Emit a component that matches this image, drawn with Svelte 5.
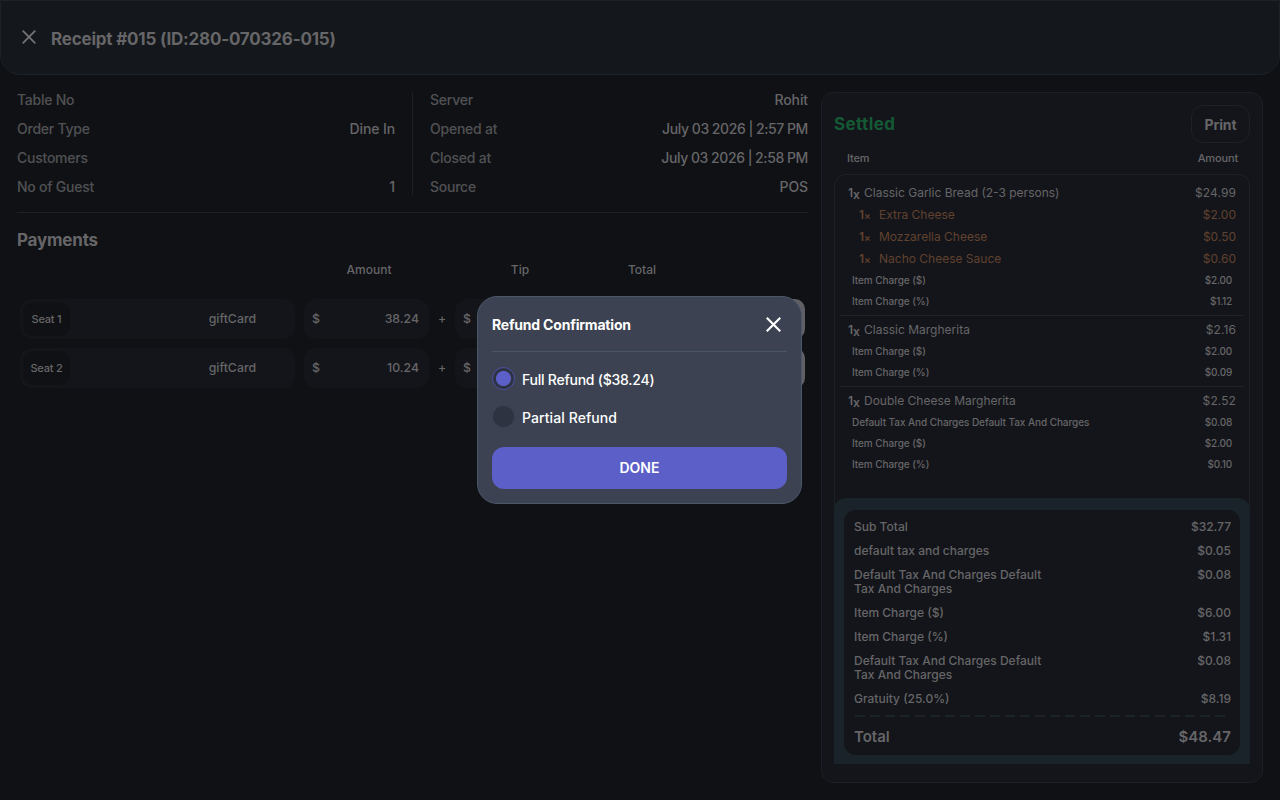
<script>
  let refund_type = $state('full');
  let modal_open = $state(true);

  const order_info = [
    ['Table No', ''],
    ['Order Type', 'Dine In'],
    ['Customers', ''],
    ['No of Guest', '1'],
  ];

  const server_info = [
    ['Server', 'Rohit'],
    ['Opened at', 'July 03 2026 | 2:57 PM'],
    ['Closed at', 'July 03 2026 | 2:58 PM'],
    ['Source', 'POS'],
  ];

  const payments = [
    { seat: 'Seat 1', method: 'giftCard', amount: '38.24' },
    { seat: 'Seat 2', method: 'giftCard', amount: '10.24' },
  ];

  const items = [
    {
      name: 'Classic Garlic Bread (2-3 persons)',
      price: '$24.99',
      modifiers: [
        ['Extra Cheese', '$2.00'],
        ['Mozzarella Cheese', '$0.50'],
        ['Nacho Cheese Sauce', '$0.60'],
      ],
      charges: [
        ['Item Charge ($)', '$2.00'],
        ['Item Charge (%)', '$1.12'],
      ],
    },
    {
      name: 'Classic Margherita',
      price: '$2.16',
      modifiers: [],
      charges: [
        ['Item Charge ($)', '$2.00'],
        ['Item Charge (%)', '$0.09'],
      ],
    },
    {
      name: 'Double Cheese Margherita',
      price: '$2.52',
      modifiers: [],
      charges: [
        ['Default Tax And Charges Default Tax And Charges', '$0.08'],
        ['Item Charge ($)', '$2.00'],
        ['Item Charge (%)', '$0.10'],
      ],
    },
  ];

  const summary = [
    ['Sub Total', '$32.77'],
    ['default tax and charges', '$0.05'],
    ['Default Tax And Charges Default Tax And Charges', '$0.08'],
    ['Item Charge ($)', '$6.00'],
    ['Item Charge (%)', '$1.31'],
    ['Default Tax And Charges Default Tax And Charges', '$0.08'],
    ['Gratuity (25.0%)', '$8.19'],
  ];
</script>

{#snippet cross(size)}
  <svg width={size} height={size} viewBox="0 0 14 14" fill="none" stroke="currentColor">
    <path d="M.7.7l12.6 12.6M13.3.7L.7 13.3" />
  </svg>
{/snippet}

{#snippet info(rows)}
  <dl class="info">
    {#each rows as [label, value]}
      <div class="info_row">
        <dt>{label}</dt>
        <dd class:date={value.includes('|')}>{value}</dd>
      </div>
    {/each}
  </dl>
{/snippet}

<div class="page">
  <header class="header">
    <button class="icon_button" aria-label="Back">{@render cross(14)}</button>
    <h1>Receipt #015 (ID:280-070326-015)</h1>
  </header>

  <main class="content">
    <section class="details">
      <div class="info_grid">
        {@render info(order_info)}
        {@render info(server_info)}
      </div>

      <h2>Payments</h2>
      <div class="pay_head">
        <span>Amount</span>
        <span>Tip</span>
        <span>Total</span>
      </div>
      {#each payments as payment}
        <div class="pay_row">
          <div class="method">
            <span class="seat">{payment.seat}</span>
            <span>{payment.method}</span>
          </div>
          <div class="money"><span>$</span><span>{payment.amount}</span></div>
          <span class="sign">+</span>
          <div class="money"><span>$</span></div>
          <button class="refund" aria-label="Refund"></button>
        </div>
      {/each}
    </section>

    <aside class="receipt">
      <div class="receipt_top">
        <span class="status">Settled</span>
        <button class="print">Print</button>
      </div>
      <div class="list_head"><span>Item</span><span>Amount</span></div>
      <div class="list">
        {#each items as item}
          <div class="item">
            <div class="line main">
              <span><b>1<small>x</small></b>{item.name}</span>
              <span class="price">{item.price}</span>
            </div>
            {#each item.modifiers as [name, price]}
              <div class="line modifier">
                <span><b>1<small>×</small></b>{name}</span>
                <span>{price}</span>
              </div>
            {/each}
            {#each item.charges as [name, price]}
              <div class="line charge"><span>{name}</span><span class="price">{price}</span></div>
            {/each}
          </div>
        {/each}
      </div>
      <div class="summary">
        <div class="summary_card">
          {#each summary as [name, price]}
            <div class="sum_row"><span class="sum_name">{name}</span><span>{price}</span></div>
          {/each}
          <div class="dashes"></div>
          <div class="sum_row total"><span>Total</span><span>$48.47</span></div>
        </div>
      </div>
    </aside>
  </main>
</div>

{#if modal_open}
  <div class="overlay">
    <div class="modal" role="dialog" aria-label="Refund Confirmation">
      <div class="modal_head">
        <h3>Refund Confirmation</h3>
        <button class="icon_button" aria-label="Close" onclick={() => modal_open = false}>
          {@render cross(15)}
        </button>
      </div>
      <label class="option full">
        <input type="radio" value="full" bind:group={refund_type}>
        <span>Full Refund ($38.24)</span>
      </label>
      <label class="option partial">
        <input type="radio" value="partial" bind:group={refund_type}>
        <span>Partial Refund</span>
      </label>
      <button class="done">DONE</button>
    </div>
  </div>
{/if}

<style>
:global(body){
  background: #101115;
  overflow: hidden;
}

.page, .overlay{
  font-family: Inter, "Liberation Sans", sans-serif;
  box-sizing: border-box;
}

.page *, .overlay *{
  box-sizing: border-box;
}

.page{
  height: 100vh;
  display: flex;
  flex-direction: column;
  color: #666668;
  font-weight: 500;
}

h1, h2, h3, dl, dt, dd{
  margin: 0;
}

button{
  font-family: inherit;
  color: inherit;
  cursor: pointer;
}

.icon_button{
  background: none;
  border: 0;
  padding: 0;
  display: flex;
}

.header{
  height: 75px;
  flex: none;
  display: flex;
  align-items: center;
  gap: 15px;
  padding: 4px 21px 0;
  background: #14171b;
  border: 1px solid #1b2229;
  border-radius: 0 0 20px 20px;
}

.header .icon_button{
  margin-top: -6px;
  color: #737375;
  stroke-width: 1.8;
}

h1{
  font-size: 17px;
  line-height: 21px;
  font-weight: 700;
  letter-spacing: -.2px;
}

.content{
  flex: 1;
  min-height: 0;
  display: grid;
  grid-template-columns: 791px 442px;
  gap: 13px;
  padding: 17px 17px 17px;
}

.info_grid{
  display: grid;
  grid-template-columns: 396px 395px;
  padding-bottom: 17px;
  border-bottom: 1px solid #1a2127;
}

.info{
  display: flex;
  flex-direction: column;
  gap: 13px;
  height: 103px;
}

.info:first-child{
  padding-right: 17px;
  border-right: 1px solid #1a2127;
}

.info:last-child{
  padding-left: 17px;
}

.info_row{
  display: flex;
  justify-content: space-between;
  height: 16px;
  font-size: 14px;
  line-height: 16px;
}

dt{
  color: #505154;
  letter-spacing: -.24px;
}

dd{
  letter-spacing: -.1px;
}

.date{
  letter-spacing: -.36px;
  word-spacing: -.4px;
}

h2{
  margin-top: 17px;
  font-size: 17px;
  line-height: 21px;
  font-weight: 700;
  letter-spacing: -.2px;
}

.pay_head{
  display: grid;
  grid-template-columns: 104px 198px 46px;
  justify-items: center;
  padding-left: 300px;
  margin: 11px 0 21px;
  font-size: 12px;
  line-height: 16px;
}

.pay_row{
  display: grid;
  grid-template-columns: 275px 125px 8px 125px 1fr;
  column-gap: 9px;
  height: 40px;
  margin: 0 3px 9px;
  align-items: stretch;
  font-size: 12.3px;
  line-height: 16px;
}

.method, .money{
  display: flex;
  align-items: center;
  justify-content: space-between;
  background: #14151a;
  border-radius: 12px;
}

.method{
  padding: 3px 39px 3px 3px;
}

.seat{
  height: 34px;
  width: 47px;
  display: grid;
  place-items: center;
  background: #101115;
  border-radius: 10px;
  font-size: 11px;
  letter-spacing: -.2px;
}

.money{
  padding: 0 10px 1px 8px;
}

.sign{
  align-self: center;
  justify-self: center;
}

.refund{
  width: 60px;
  justify-self: end;
  border: 0;
  border-radius: 10px;
  background: #606064;
}

.receipt{
  display: flex;
  flex-direction: column;
  padding: 12px 12px 18px;
  background: #14151a;
  border: 1px solid #1a2025;
  border-radius: 12px;
}

.receipt_top{
  display: flex;
  justify-content: space-between;
  align-items: center;
  height: 38px;
}

.status{
  color: #145935;
  font-size: 17px;
  font-weight: 700;
  letter-spacing: .4px;
}

.print{
  width: 59px;
  height: 38px;
  padding: 0;
  background: none;
  border: 1px solid #1c2227;
  border-radius: 12px;
  font-size: 14px;
  font-weight: 700;
  letter-spacing: -.1px;
}

.list_head{
  display: flex;
  justify-content: space-between;
  padding: 9px 12px 9px 13px;
  font-size: 11px;
  line-height: 13px;
  letter-spacing: -.15px;
}

.list{
  flex: 1;
  /* the side borders run on behind the rounded top of the summary */
  margin-bottom: -12px;
  padding: 7px 5px 0;
  border: 1px solid #1b2226;
  border-bottom: 0;
  border-radius: 12px 12px 0 0;
}

.item{
  padding-bottom: 3px;
}

.item + .item{
  border-top: 1px solid #1d2225;
  padding-top: 3px;
}

.line{
  display: flex;
  justify-content: space-between;
  align-items: center;
  height: 21px;
  padding: 0 8px;
}

.main, .modifier{
  height: 22px;
  font-size: 12px;
  line-height: 15px;
  padding-bottom: 1px;
  font-weight: 400;
}

.main .price{
  letter-spacing: .1px;
}

.line b{
  display: inline-block;
  font-weight: 600;
}

.main b{
  width: 16px;
}

.main small{
  font-size: 12px;
  line-height: 0;
  position: relative;
  top: 2px;
}

.modifier{
  color: #60422f;
  padding-left: 19px;
}

.modifier b{
  width: 20px;
}

.modifier small{
  font-size: 10px;
}

.charge{
  font-size: 10px;
  line-height: 13px;
  letter-spacing: -.07px;
  padding: 0 12px;
}

.charge .price{
  letter-spacing: -.2px;
}

.summary{
  height: 266px;
  flex: none;
  z-index: 1;
  padding: 12px 10px 9px;
  background: #1b232a;
  border-radius: 12px 12px 0 0;
}

.summary_card{
  height: 245px;
  display: flex;
  flex-direction: column;
  gap: 10px;
  padding: 10px 9px 0 10px;
  background: #14151a;
  border-radius: 12px;
}

.sum_row{
  display: flex;
  justify-content: space-between;
  font-size: 12px;
  line-height: 14px;
}

.sum_name{
  width: 200px;
}

.dashes{
  height: 2px;
  margin: -1px 5px 0 1px;
  background: repeating-linear-gradient(90deg, #1b2329 0 10px, transparent 10px 15px);
}

.total{
  font-size: 15px;
  line-height: 20px;
  font-weight: 600;
}

.overlay{
  position: fixed;
  inset: 0 2px 0 0;
  display: grid;
  place-items: center;
}

.modal{
  width: 325px;
  height: 208px;
  padding: 0 14px;
  background: #3c4251;
  border: 1px solid #4a586a;
  border-radius: 20px;
  color: #fff;
}

.modal_head{
  height: 55px;
  display: flex;
  align-items: center;
  justify-content: space-between;
  padding: 0 6px 0 .5px;
  border-bottom: 1px solid #4a5566;
}

.modal_head .icon_button{
  stroke-width: 2;
}

h3{
  font-size: 14px;
  font-weight: 700;
  letter-spacing: -.2px;
}

.option{
  display: flex;
  align-items: center;
  gap: 7.5px;
  height: 23px;
  font-size: 14px;
  font-weight: 500;
}

.option span{
  padding-top: 2px;
}

.full{
  margin-top: 15px;
  letter-spacing: -.24px;
}

.partial{
  margin-top: 15px;
  letter-spacing: .08px;
}

.option input{
  appearance: none;
  width: 23px;
  height: 23px;
  margin: 0;
  border: 1px solid #3a4252;
  border-radius: 50%;
  background: #2d3340;
}

.option input:checked{
  border-color: #4c4fa5;
  background: radial-gradient(circle, #5d5fc9 7px, #2d3340 8px);
}

.done{
  width: 100%;
  height: 42px;
  margin-top: 19px;
  padding: 0 0 1px 1px;
  border: 0;
  border-radius: 12px;
  background: #5c5fc8;
  font-size: 14px;
  font-weight: 600;
}
</style>
